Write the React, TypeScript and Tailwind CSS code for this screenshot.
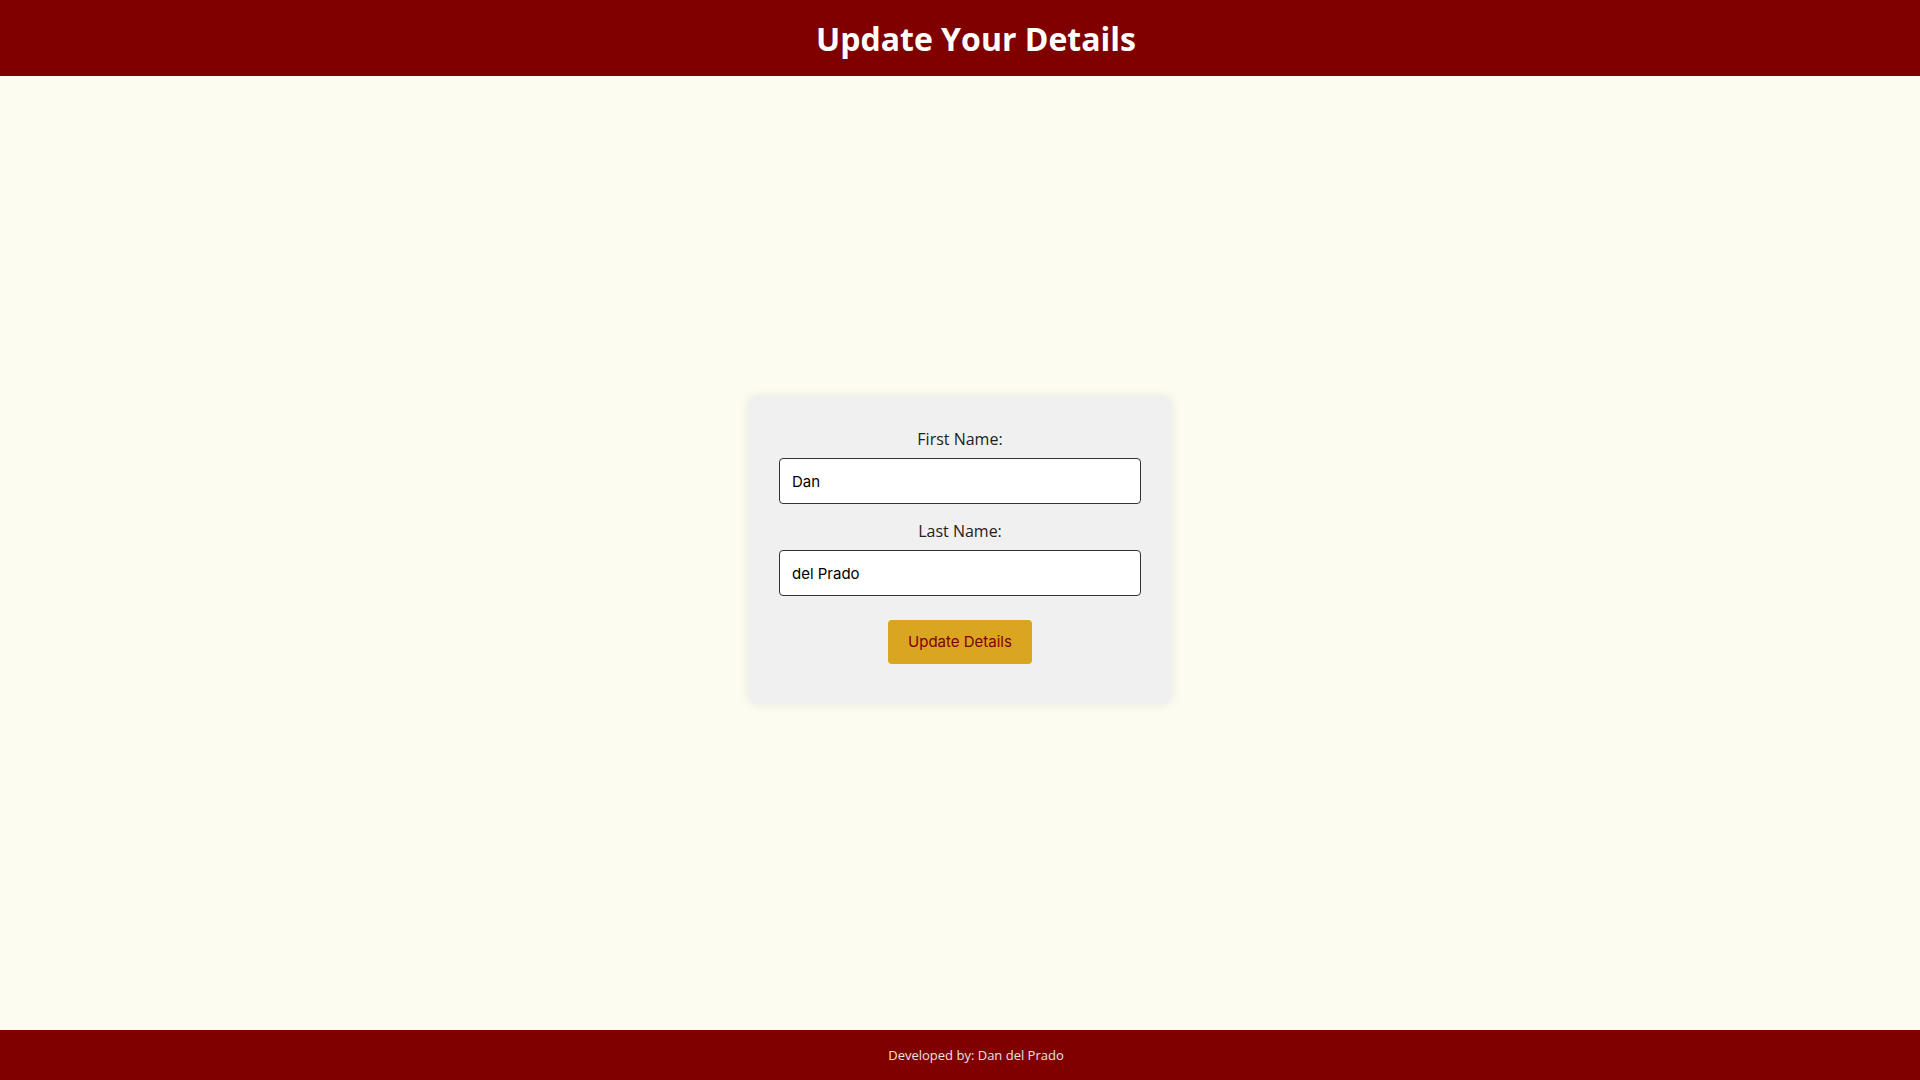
import type React from "react"

const App: React.FC = () => {
  return (
    <div className="flex flex-col min-h-screen h-screen bg-[#fdfcf0] font-['Open_Sans',sans-serif]">
      {/* Header */}
      <header className="h-[76px] shrink-0 bg-[#800000] flex items-center justify-center pl-8 pt-[2px]">
        <h1 className="text-[32px] font-bold text-white leading-none">Update Your Details</h1>
      </header>

      {/* Form area */}
      <main className="flex-1 flex items-center justify-center pb-[6px]">
        <form className="w-[424px] bg-[#f0f0f0] rounded-[8px] shadow-[0_0_12px_rgba(0,0,0,0.08)] pt-[31px] pb-[40px] px-[31px] flex flex-col items-center">
          <label className="text-[16px] leading-[24px] text-[#222]">First Name:</label>
          <input
            type="text"
            defaultValue="Dan"
            className="mt-[7px] w-full h-[46px] bg-white border border-[#333] rounded-[4px] px-3 text-[15px] text-black font-['Inter',sans-serif] focus:outline-none"
          />
          <label className="mt-[15px] text-[16px] leading-[24px] text-[#222]">Last Name:</label>
          <input
            type="text"
            defaultValue="del Prado"
            className="mt-[7px] w-full h-[46px] bg-white border border-[#333] rounded-[4px] px-3 text-[15px] text-black font-['Inter',sans-serif] focus:outline-none"
          />
          <button
            type="button"
            className="mt-[24px] w-[144px] h-[44px] bg-[#daa520] rounded-[4px] text-[15px] text-[#800000] font-['Inter',sans-serif]"
          >
            Update Details
          </button>
        </form>
      </main>

      {/* Footer */}
      <footer className="h-[50px] shrink-0 bg-[#800000] flex items-center justify-center pl-8 pt-[1px]">
        <p className="text-[13px] text-[#e8e0e0]">Developed by: Dan del Prado</p>
      </footer>
    </div>
  )
}

export default App
